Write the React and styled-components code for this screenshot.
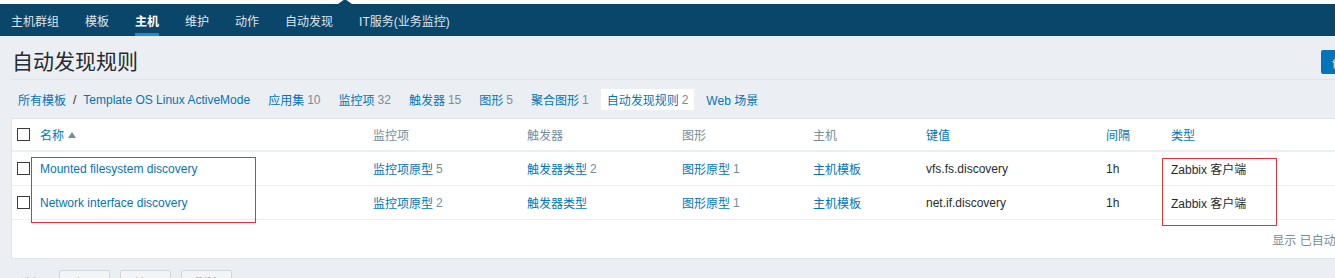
import React from "react";
import styled, { createGlobalStyle } from "styled-components";

const GlobalStyle = createGlobalStyle`
  html, body {
    margin: 0;
    padding: 0;
    overflow: hidden;
    background: #ebeef2;
  }
  body {
    font-family: "Liberation Sans", Arial, "Noto Sans CJK SC", sans-serif;
    font-size: 12px;
    color: #1f2c33;
  }
  * { box-sizing: border-box; }
`;

const COLS = "23px 333px 154px 155px 131px 113px 180px 65px 1fr";

const TopStrip = styled.div`
  height: 4px;
  background: #ffffff;
`;

const SubNav = styled.nav`
  position: relative;
  display: flex;
  gap: 26px;
  height: 32px;
  padding-left: 11px;
  background: #0a466a;
`;

const NavArrow = styled.span`
  position: absolute;
  top: -5px;
  left: 338px;
  width: 0;
  height: 0;
  border-left: 7px solid transparent;
  border-right: 7px solid transparent;
  border-bottom: 5px solid #0a466a;
`;

const NavItem = styled.a`
  display: flex;
  align-items: center;
  height: 32px;
  padding-top: 1px;
  color: ${(p) => (p.$active ? "#ffffff" : "#dce5eb")};
  font-weight: ${(p) => (p.$active ? "bold" : "normal")};
  text-decoration: none;
  white-space: nowrap;
  box-shadow: ${(p) => (p.$active ? "inset 0 -3px 0 #1f8ad0" : "none")};
`;

const Content = styled.main`
  width: 1425px;
  padding-left: 11px;
`;

const Header = styled.header`
  display: flex;
  align-items: center;
  justify-content: space-between;
  padding: 14px 0 5px;
  border-bottom: 1px solid #dde3e7;
`;

const Title = styled.h1`
  margin: 0 0 0 1px;
  font-size: 21px;
  font-weight: normal;
  line-height: 24px;
  color: #1f2c33;
`;

const PrimaryButton = styled.button`
  height: 24px;
  margin-right: 10px;
  padding: 0 11px;
  border: 0;
  border-radius: 2px;
  background: #0275b8;
  color: #ffffff;
  font: inherit;
  white-space: nowrap;
`;

const TabRow = styled.div`
  display: flex;
  gap: 6px;
  margin: 9px 0 8px 1px;
`;

const Tab = styled.div`
  display: flex;
  align-items: center;
  height: 21px;
  padding: 0 6px;
  background: ${(p) => (p.$active ? "#ffffff" : "transparent")};
  white-space: nowrap;
`;

const Link = styled.a`
  color: #0275b8;
  text-decoration: none;
  white-space: nowrap;
`;

const Current = styled.span`
  color: #0275b8;
`;

const Count = styled.span`
  color: #768d99;
  margin-left: 3px;
`;

const Sep = styled.span`
  margin: 0 7px;
  color: #1f2c33;
`;

const Panel = styled.section`
  position: relative;
  background: #ffffff;
  border: 1px solid #dfe4e7;
`;

const HeadRow = styled.div`
  display: grid;
  grid-template-columns: ${COLS};
  height: 33px;
  border-bottom: 2px solid #ebeef2;
`;

const Row = styled.div`
  display: grid;
  grid-template-columns: ${COLS};
  height: 34px;
  border-bottom: 1px solid #ebeef2;
`;

const Cell = styled.div`
  display: flex;
  align-items: center;
  padding-left: 5px;
  white-space: nowrap;
  color: ${(p) => (p.$muted ? "#768d99" : "#1f2c33")};
`;

const Check = styled.span`
  display: inline-block;
  width: 13px;
  height: 13px;
  border: 1px solid #3a3a3a;
  background: #ffffff;
`;

const SortArrow = styled.span`
  display: inline-block;
  margin-left: 4px;
  width: 0;
  height: 0;
  border-left: 4px solid transparent;
  border-right: 4px solid transparent;
  border-bottom: 6px solid #768d99;
`;

const Footer = styled.div`
  display: flex;
  align-items: center;
  justify-content: flex-end;
  height: 38px;
  padding-right: 5px;
  color: #768d99;
  white-space: nowrap;
`;

const Annotation = styled.div`
  position: absolute;
  border: 1px solid #e5322f;
  pointer-events: none;
`;

const ActionBar = styled.div`
  display: flex;
  align-items: center;
  gap: 10px;
  margin-top: 11px;
  padding-left: 9px;
`;

const SelCount = styled.span`
  color: #768d99;
  margin-right: 5px;
`;

const ActButton = styled.button`
  height: 24px;
  width: 51px;
  border: 1px solid #cfd8dc;
  border-radius: 2px;
  background: #f2f4f6;
  color: #9aabb5;
  font: inherit;
`;

const navItems = ["主机群组", "模板", "主机", "维护", "动作", "自动发现", "IT服务(业务监控)"];

const tabs = [
  { label: "应用集", count: 10 },
  { label: "监控项", count: 32 },
  { label: "触发器", count: 15 },
  { label: "图形", count: 5 },
  { label: "聚合图形", count: 1 },
  { label: "自动发现规则", count: 2, active: true },
  { label: "Web 场景" },
];

const rows = [
  {
    name: "Mounted filesystem discovery",
    items: 5,
    triggers: 2,
    graphs: 1,
    key: "vfs.fs.discovery",
  },
  {
    name: "Network interface discovery",
    items: 2,
    triggers: null,
    graphs: 1,
    key: "net.if.discovery",
  },
];

export default function App() {
  return (
    <>
      <GlobalStyle />
      <TopStrip />
      <SubNav>
        <NavArrow />
        {navItems.map((n) => (
          <NavItem key={n} $active={n === "主机"}>
            {n}
          </NavItem>
        ))}
      </SubNav>
      <Content>
        <Header>
          <Title>自动发现规则</Title>
          <PrimaryButton>创建发现规则</PrimaryButton>
        </Header>
        <TabRow>
          <Tab>
            <Link>所有模板</Link>
            <Sep>/</Sep>
            <Link>Template OS Linux ActiveMode</Link>
          </Tab>
          {tabs.map((t) => (
            <Tab key={t.label} $active={t.active}>
              {t.active ? <Current>{t.label}</Current> : <Link>{t.label}</Link>}
              {t.count != null && <Count>{t.count}</Count>}
            </Tab>
          ))}
        </TabRow>
        <Panel>
          <HeadRow>
            <Cell><Check /></Cell>
            <Cell><Link>名称</Link><SortArrow /></Cell>
            <Cell $muted>监控项</Cell>
            <Cell $muted>触发器</Cell>
            <Cell $muted>图形</Cell>
            <Cell $muted>主机</Cell>
            <Cell><Link>键值</Link></Cell>
            <Cell><Link>间隔</Link></Cell>
            <Cell><Link>类型</Link></Cell>
          </HeadRow>
          {rows.map((r) => (
            <Row key={r.name}>
              <Cell><Check /></Cell>
              <Cell><Link>{r.name}</Link></Cell>
              <Cell><Link>监控项原型</Link><Count>{r.items}</Count></Cell>
              <Cell>
                <Link>触发器类型</Link>
                {r.triggers != null && <Count>{r.triggers}</Count>}
              </Cell>
              <Cell><Link>图形原型</Link><Count>{r.graphs}</Count></Cell>
              <Cell><Link>主机模板</Link></Cell>
              <Cell>{r.key}</Cell>
              <Cell>1h</Cell>
              <Cell>Zabbix 客户端</Cell>
            </Row>
          ))}
          <Footer>显示 已自动发现的 2 中的 2</Footer>
          <Annotation style={{ left: 19, top: 38, width: 225, height: 66 }} />
          <Annotation style={{ left: 1150, top: 39, width: 115, height: 68 }} />
        </Panel>
        <ActionBar>
          <SelCount>选择</SelCount>
          <ActButton>启用</ActButton>
          <ActButton>禁用</ActButton>
          <ActButton>删除</ActButton>
        </ActionBar>
      </Content>
    </>
  );
}
